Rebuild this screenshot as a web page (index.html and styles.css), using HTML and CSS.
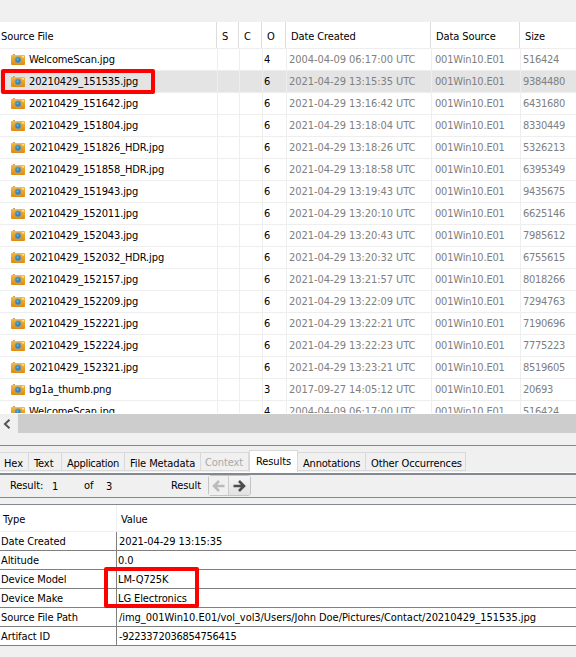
FILE: index.html
```html
<!DOCTYPE html>
<html lang="en">
<head>
<meta charset="utf-8">
<title>Results</title>
<link rel="stylesheet" href="styles.css">
</head>
<body>
<main class="app">
  <section class="files">
    <div class="row head"><span>Source File</span><span>S</span><span>C</span><span>O</span><span>Date Created</span><span>Data Source</span><span>Size</span></div>
    <div class="rows" id="rows"></div>
  </section>
  <div class="scroll"><div class="scroll-button"><svg width="8" height="10" viewBox="0 0 8 10"><path d="M6.5 .8 2 5l4.500 4.200" fill="none" stroke="#555" stroke-width="2"/></svg></div></div>
  <nav class="tabs">
    <span class="tab hex">Hex</span><span class="tab text">Text</span><span class="tab application">Application</span><span class="tab metadata">File Metadata</span><span class="tab context">Context</span><span class="tab results">Results</span><span class="tab annotations">Annotations</span><span class="tab others">Other Occurrences</span>
  </nav>
  <div class="pager">
    <span class="p-label">Result:</span><span class="p-num">1</span><span class="p-of">of</span><span class="p-total">3</span><span class="p-result">Result</span>
    <span class="arrows">
      <span class="arrow off"><svg width="13" height="12" viewBox="0 0 13 12"><path d="M12.500 6H2M7 1 2 6l5 5" fill="none" stroke="currentColor" stroke-width="2.500"/></svg></span><span class="arrow"><svg width="13" height="12" viewBox="0 0 13 12"><path d="M.5 6H11M6 1l5 5-5 5" fill="none" stroke="currentColor" stroke-width="2.600"/></svg></span>
    </span>
  </div>
  <section class="details">
    <div class="detail detail-head"><span>Type</span><span>Value</span></div>
    <div class="detail"><span>Date Created</span><span class="digits">2021-04-29 13:15:35</span></div>
    <div class="detail"><span>Altitude</span><span>0.0</span></div>
    <div class="detail"><span>Device Model</span><span>LM-Q725K</span></div>
    <div class="detail"><span>Device Make</span><span>LG Electronics</span></div>
    <div class="detail"><span>Source File Path</span><span class="path">/img_001Win10.E01/vol_vol3/Users/John Doe/Pictures/Contact/20210429_151535.jpg</span></div>
    <div class="detail"><span>Artifact ID</span><span class="digits artifact">-9223372036854756415</span></div>
  </section>
  <div class="mark mark-file"></div>
  <div class="mark mark-device"></div>
</main>
<svg width="0" height="0" class="defs">
  <linearGradient id="body" x1="0" y1="0" x2="0" y2="1"><stop offset="0" stop-color="#f8b83c"/><stop offset="1" stop-color="#e28a0a"/></linearGradient>
  <symbol id="camera" viewBox="0 0 14 11">
    <path d="M2 0h2v2H2z" fill="#c9a468"/>
    <rect y="1" width="14" height="10" rx="1" fill="url(#body)"/>
    <path d="M4 1h6v1H4z" fill="#c8c0a8"/><path d="M11 2h2v1.500h-2z" fill="#ffe7a8"/>
    <circle cx="7" cy="6" r="3.700" fill="#b3a078"/><circle cx="7" cy="6" r="2.700" fill="#3686b5"/><circle cx="6.600" cy="5.300" r="1.100" fill="#69b6d4"/>
  </symbol>
</svg>
<script src="files.js"></script>
</body>
</html>
```
FILE: files.js
```js
const files = [
  ["WelcomeScan.jpg", 4, "2004-04-09 06:17:00", "516424"],
  ["20210429_151535.jpg", 6, "2021-04-29 13:15:35", "9384480"],
  ["20210429_151642.jpg", 6, "2021-04-29 13:16:42", "6431680"],
  ["20210429_151804.jpg", 6, "2021-04-29 13:18:04", "8330449"],
  ["20210429_151826_HDR.jpg", 6, "2021-04-29 13:18:26", "5326213"],
  ["20210429_151858_HDR.jpg", 6, "2021-04-29 13:18:58", "6395349"],
  ["20210429_151943.jpg", 6, "2021-04-29 13:19:43", "9435675"],
  ["20210429_152011.jpg", 6, "2021-04-29 13:20:10", "6625146"],
  ["20210429_152043.jpg", 6, "2021-04-29 13:20:43", "7985612"],
  ["20210429_152032_HDR.jpg", 6, "2021-04-29 13:20:32", "6755615"],
  ["20210429_152157.jpg", 6, "2021-04-29 13:21:57", "8018266"],
  ["20210429_152209.jpg", 6, "2021-04-29 13:22:09", "7294763"],
  ["20210429_152221.jpg", 6, "2021-04-29 13:22:21", "7190696"],
  ["20210429_152224.jpg", 6, "2021-04-29 13:22:23", "7775223"],
  ["20210429_152321.jpg", 6, "2021-04-29 13:23:21", "8519605"],
  ["bg1a_thumb.png", 3, "2017-09-27 14:05:12", "20693"],
  ["WelcomeScan.jpg", 4, "2004-04-09 06:17:00", "516424"],
];
document.getElementById("rows").innerHTML = files.map(([name, count, date, size], i) =>
  `<div class="row${i === 1 ? " selected" : ""}"><span class="name"><svg class="camera" width="14" height="11"><use href="#camera"/></svg>${name}</span><span></span><span></span><span class="count">${count}</span><span>${date} UTC</span><span class="source">001Win10.E01</span><span class="size">${size}</span></div>`).join("");
```
FILE: styles.css
```css
* { box-sizing: border-box; }
body { margin: 0; background: #f0f0f0; color: #000; font: 11px/14px "DejaVu Sans Condensed", "DejaVu Sans", sans-serif; font-stretch: condensed; }
svg { display: block; flex: none; }
.app { position: relative; width: 576px; height: 657px; overflow: hidden; padding-top: 22px; }
.defs { position: absolute; }
.files { height: 392px; overflow: hidden; background: #fff; border-bottom: 1px solid #fff; }
.row { display: grid; grid-template-columns: 218px 22px 23px 24px 145px 89px 55px; height: 22px; border-bottom: 1px solid #eee; color: #808080; white-space: nowrap; }
.row > span { display: flex; align-items: center; border-right: 1px solid #eee; padding: 1px 0 0 2px; letter-spacing: -0.06px; }
.row > span:last-child { border-right: 0; }
.row .name { padding-left: 11px; gap: 4px; color: #000; letter-spacing: -0.13px; }
.camera { margin-top: -2px; }
.row .count { color: #000; padding-left: 1px; }
.row .source { padding-left: 3px; letter-spacing: -0.2px; }
.row .size { letter-spacing: -0.3px; }
.row.selected { background: #e4e4e4; }
.row.head { height: 27px; color: #000; grid-template-columns: 217px 22px 23px 24px 145px 89px 56px; }
.row.head > span { padding: 4px 0 0 5px; border-color: #ddd; letter-spacing: -0.1px; }
.row.head > span:first-child { padding-left: 1px; }
.scroll { height: 19px; background: #cdcdcd; }
.scroll-button { width: 18px; height: 19px; display: flex; align-items: center; padding-left: 3px; background: #f0f0f0; }
.tabs { display: flex; align-items: flex-end; height: 30px; margin-top: 12px; padding-bottom: 2px; border-top: 1px solid #828790; border-bottom: 2px solid #828790; background: linear-gradient(#fff, #fff) bottom / 100% 1px no-repeat; white-space: nowrap; }
.tab { height: 19px; padding: 4px 0 0 5px; border: solid #d9d9d9; border-width: 1px 1px 1px 0; letter-spacing: -0.1px; }
.hex { width: 29px; padding-left: 4px; }
.text { width: 33px; }
.application { width: 63px; letter-spacing: -0.3px; }
.metadata { width: 76px; }
.context { width: 48px; padding: 3px 0 0 4px; color: #a8a8a8; }
.results { width: 49px; height: 22px; margin-bottom: -1px; padding-left: 6px; border-left-width: 1px; border-bottom: 0; background: #fff; }
.annotations { width: 68px; letter-spacing: -0.2px; }
.others { width: 100px; letter-spacing: -0.12px; }
.pager { display: flex; height: 23px; border-bottom: 1px solid #828790; line-height: 22px; letter-spacing: -0.1px; }
.p-label { width: 42px; margin-left: 10px; }
.p-num { width: 32px; }
.p-of { width: 22px; }
.p-total { width: 65px; }
.p-num, .p-total { line-height: 23px; }
.p-result { width: 37px; }
.arrows { display: flex; height: 21px; border: 1px solid #c4c4c4; border-radius: 3px; background: #efefef; }
.arrow { width: 21px; display: flex; align-items: center; justify-content: center; color: #4c4c4c; background: linear-gradient(#f5f5f5, #e2e2e2); }
.arrow.off { width: 20px; color: #bbb; background: #f0f0f0; border-right: 1px solid #ccc; }
.details { margin-top: 6px; border-top: 1px solid #828790; background: #fff; }
.detail { display: grid; grid-template-columns: 117px 1fr; grid-template-rows: 18px; height: 19px; border-bottom: 1px solid #808080; line-height: 20px; white-space: nowrap; }
.detail > span { padding-left: 1px; letter-spacing: -0.1px; }
.detail > span:first-child { border-right: 1px solid #808080; }
.detail .digits { letter-spacing: -0.1px; padding-left: 2px; }
.detail .artifact { letter-spacing: -0.28px; }
.detail .path { padding-left: 2px; letter-spacing: -0.05px; }
.detail-head { height: 27px; grid-template-rows: 26px; line-height: 30px; border-color: #eee; }
.detail-head > span { padding-left: 3px; }
.detail-head > span:first-child { border-color: #eee; }
.detail-head > span:last-child { padding-left: 4px; }
.mark { position: absolute; border: solid #f00; border-width: 4px; border-radius: 2px; }
.mark-file { left: 1px; top: 69px; width: 154px; height: 25px; }
.mark-device { left: 104px; top: 567px; width: 95px; height: 41px; }
```
